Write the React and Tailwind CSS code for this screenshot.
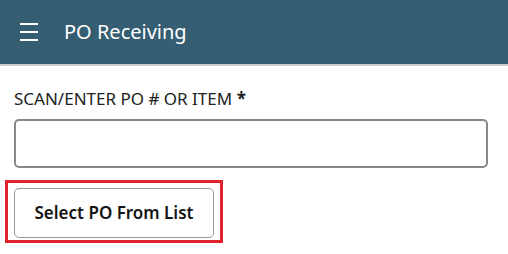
export default function App() {
  return (
    <div className="w-[508px] h-[254px] bg-white font-['Noto_Sans',sans-serif] overflow-hidden">
      <header className="h-[66px] bg-[#365e73] border-b-2 border-[#c9cfd3] flex items-center">
        <button className="ml-[20px] w-[18px] flex flex-col gap-[6px]">
          <span className="block h-[2px] bg-white"></span>
          <span className="block h-[2px] bg-white"></span>
          <span className="block h-[2px] bg-white"></span>
        </button>
        <h1 className="ml-[26px] text-white text-[20px] leading-none">PO Receiving</h1>
      </header>

      <div className="px-[14px] pt-[22px]">
        <label className="block text-[17px] leading-[22px] text-[#222]">
          SCAN/ENTER PO # OR ITEM <span className="font-bold">*</span>
        </label>
        <input
          type="text"
          className="mt-[9px] w-[474px] h-[49px] border-2 border-[#888] rounded-[5px] outline-none"
        />
      </div>

      <div className="ml-[5px] mt-[12px] w-[218px] h-[63px] border-[3px] border-[#e2202a] p-[5px] pl-[6px]">
        <button className="w-[200px] h-[50px] border border-[#999] rounded-[5px] bg-white text-[17px] font-semibold text-[#161513]">
          Select PO From List
        </button>
      </div>
    </div>
  );
}
